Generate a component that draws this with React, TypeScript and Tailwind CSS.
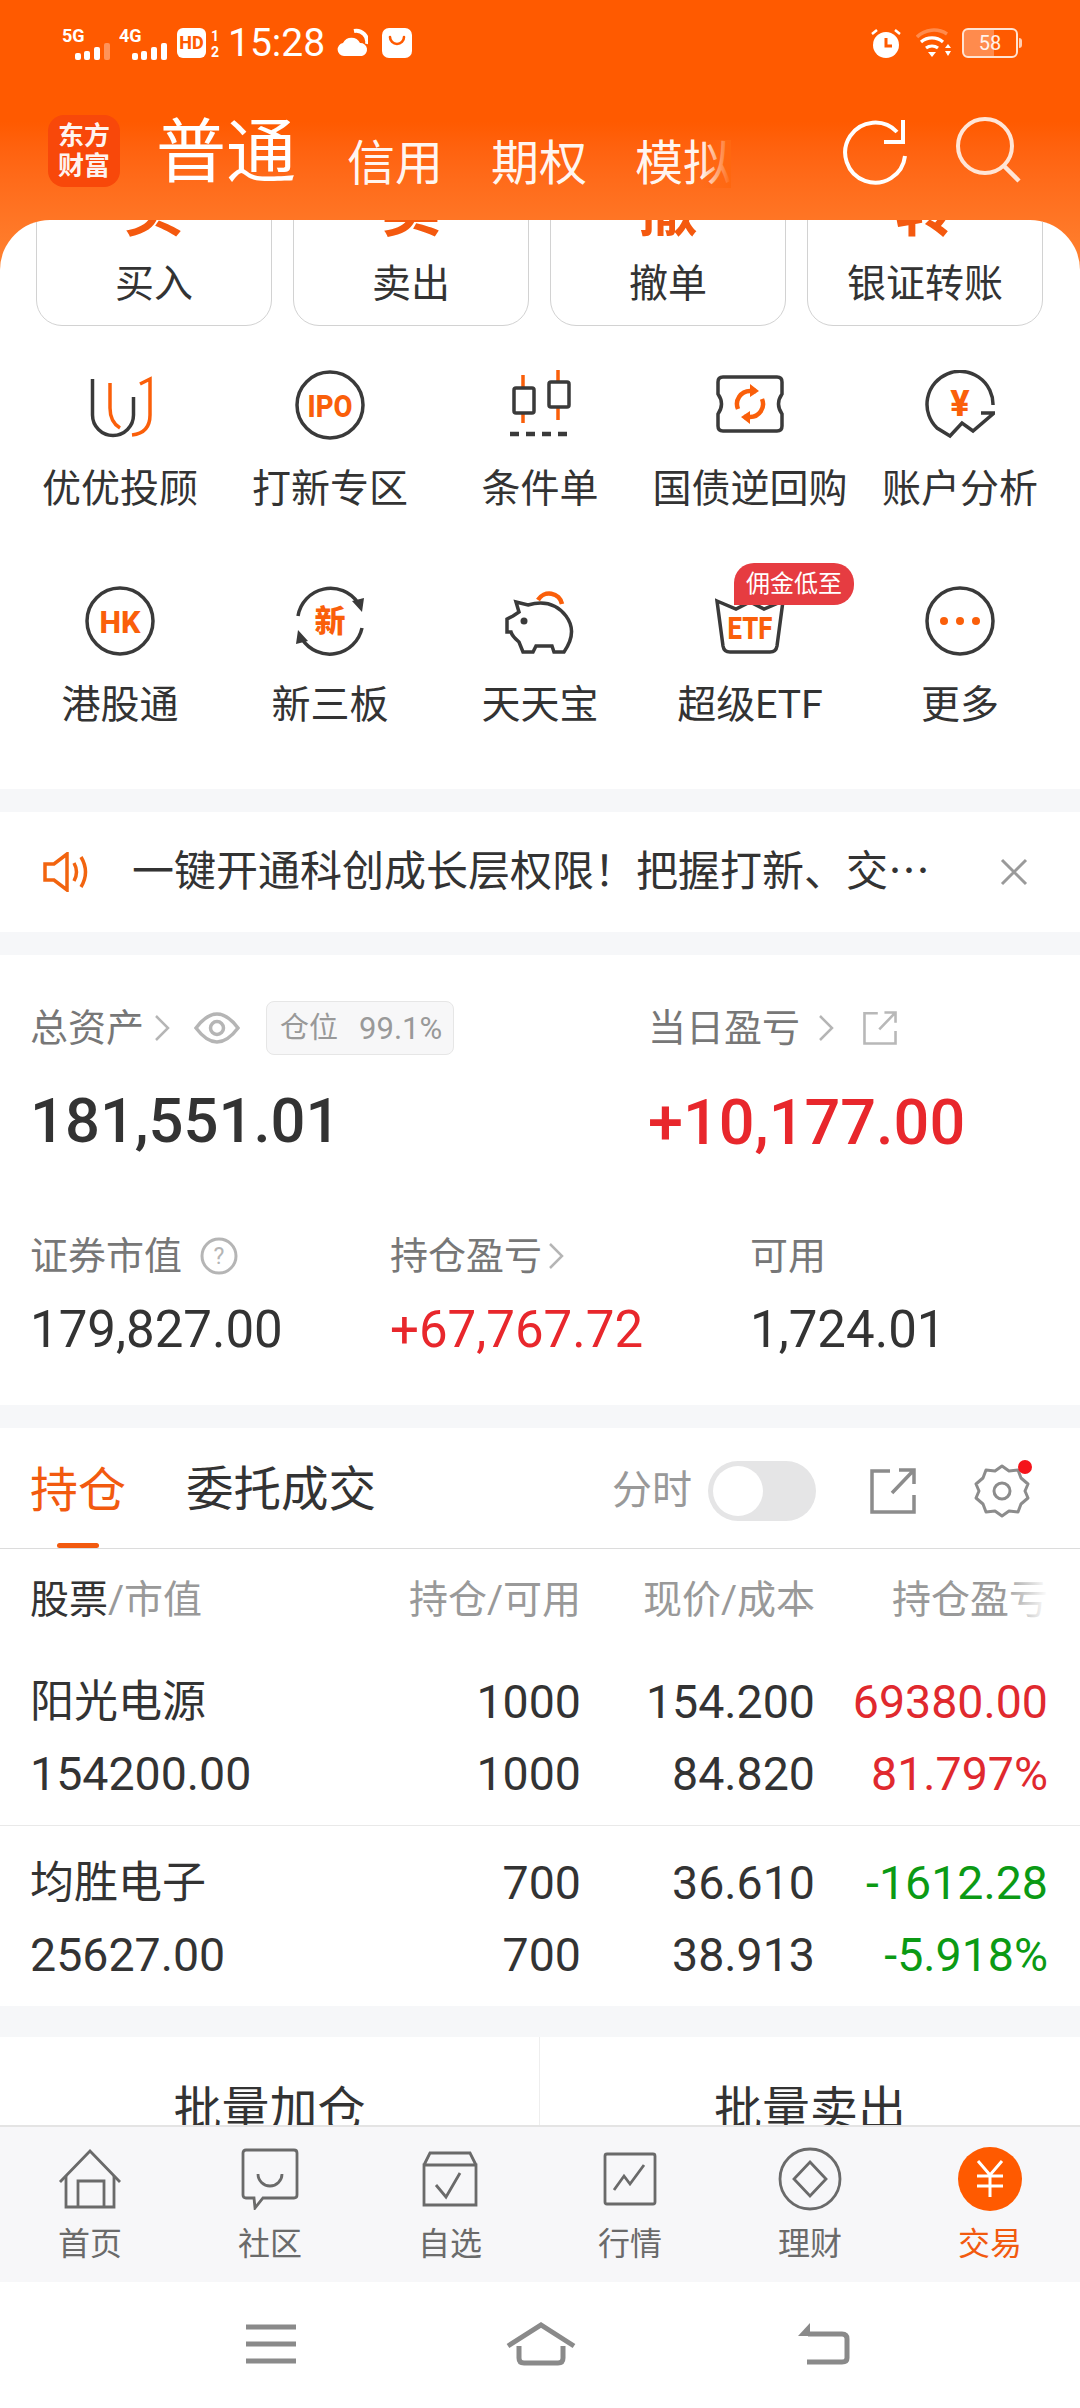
import React from 'react';

const DARK = '#3a3a3a';
const ORANGE = '#fa5f0a';

const Signal = ({ label, faded }: { label: string; faded?: boolean }) => (
  <svg width="50" height="34" viewBox="0 -2 50 34" className="shrink-0">
    <text x="0" y="14" fontSize="18" fontWeight="700" fill="#fff">{label}</text>
    <rect x="13" y="25" width="6" height="7" rx="2" fill="#fff" />
    <rect x="22" y="23" width="6" height="9" rx="2" fill="#fff" />
    <rect x="32" y="19" width="6" height="13" rx="2" fill="#fff" />
    <rect x="42" y="15" width="6" height="17" rx="2" fill="#fff" opacity={faded ? 0.35 : 1} />
  </svg>
);

const StatusBar = () => (
  <div className="flex h-[85px] items-center justify-between pl-[62px] pr-[62px] pt-[1px] text-white">
    <div className="flex items-center">
      <Signal label="5G" faded />
      <div className="ml-[7px]">
        <Signal label="4G" />
      </div>
      <svg width="43" height="32" viewBox="0 -1 43 32" className="ml-[8px]">
        <rect width="29" height="30" rx="6" fill="#fff" />
        <text x="14.5" y="21" textAnchor="middle" fontSize="18" fontWeight="800" fill="#ff5a00">HD</text>
        <text x="34" y="13" fontSize="14" fontWeight="700" fill="#fff">1</text>
        <text x="34" y="29" fontSize="14" fontWeight="700" fill="#fff">2</text>
      </svg>
      <span className="ml-[8px] text-[39px] leading-none">15:28</span>
      <svg width="31" height="30" viewBox="0 0 31 30" className="ml-[12px]">
        <path d="M7 28a6.5 6.5 0 0 1-1-12.9A9.5 9.5 0 0 1 23 15a6.6 6.6 0 0 1 2 13z" fill="#fff" />
        <path d="M17 3a11 11 0 0 1 13 13" fill="none" stroke="#fff" strokeWidth="4" />
      </svg>
      <svg width="30" height="30" viewBox="0 0 30 30" className="ml-[14px]">
        <rect width="30" height="30" rx="7" fill="#fff" />
        <path d="M8 9a7 7 0 0 0 14 0" fill="none" stroke="#ff5a00" strokeWidth="2.6" strokeLinecap="round" />
      </svg>
    </div>
    <div className="flex items-center">
      <svg width="30" height="30" viewBox="0 0 30 30">
        <circle cx="15" cy="17" r="13" fill="#fff" />
        <path d="M15 10v8h6" fill="none" stroke="#ff5a00" strokeWidth="3" />
        <path d="M1 6l5-4M29 6l-5-4" stroke="#fff" strokeWidth="2.5" />
      </svg>
      <svg width="36" height="30" viewBox="0 0 36 30" className="ml-[15px]">
        <path d="M1 9a24 24 0 0 1 30 -3" fill="none" stroke="#fff" strokeOpacity="0.3" strokeWidth="3.5" />
        <path d="M5 14a17 17 0 0 1 22 0M10 20a10 10 0 0 1 12 0" fill="none" stroke="#fff" strokeWidth="3.2" />
        <path d="M12 24h8l-4 5z" fill="#fff" />
        <path d="M29 20h6l-3-4zM29 23h6l-3 5z" fill="#fff" />
      </svg>
      <div className="relative ml-[10px] flex h-[30px] w-[56px] items-center rounded-[6px] border-2 border-[#ffe3d2]">
        <div className="h-full w-[30px] bg-white/30" />
        <span className="absolute inset-0 flex items-center justify-center text-[20px] leading-none text-white/90">58</span>
        <div className="absolute -right-[6px] top-[8px] h-[10px] w-[3px] rounded-r-sm bg-white/70" />
      </div>
    </div>
  </div>
);

const TopBar = () => (
  <div className="relative mt-[30px] flex h-[72px] items-center pl-[48px]">
    <div className="flex h-[72px] w-[72px] shrink-0 flex-col items-center justify-center rounded-[16px] bg-[#f8480a] text-[26px] font-bold leading-[30px] text-white/95">
      <span>东方</span>
      <span>财富</span>
    </div>
    <span className="ml-[36px] mt-[4px] text-[70px] leading-none text-white">普通</span>
    <span className="ml-[51px] mt-[26px] text-[48px] leading-none text-white/95">信用</span>
    <span className="ml-[48px] mt-[26px] text-[48px] leading-none text-white/95">期权</span>
    <span className="relative ml-[48px] mt-[26px] text-[48px] leading-none text-white/95">
      模拟
      <span className="absolute right-0 top-0 h-full w-[30px] bg-gradient-to-r from-transparent to-[#ff6710]" />
    </span>
    <svg width="66" height="66" viewBox="0 0 66 66" className="ml-[112px] mt-[1px] shrink-0">
      <path d="M62 37a30 30 0 1 1-8-24" fill="none" stroke="#fff" strokeWidth="4" />
      <path d="M60 1v22H41" fill="none" stroke="#fff" strokeWidth="4" />
    </svg>
    <svg width="66" height="66" viewBox="0 0 66 66" className="ml-[47px] mt-[-2px] shrink-0">
      <circle cx="29" cy="29" r="27" fill="none" stroke="#ffe5d6" strokeWidth="4" />
      <path d="M48 49l15 15" stroke="#ffe5d6" strokeWidth="4.5" />
    </svg>
  </div>
);

const QuickButton = ({ glyph, label }: { glyph: string; label: string }) => (
  <div className="flex h-[206px] flex-col items-center justify-end rounded-[26px] border border-[#d2d2d2] pb-[16px]">
    <span className="text-[60px] font-bold leading-[60px] text-[#f4590f]">{glyph}</span>
    <span className="mt-[18px] text-[39px] leading-[50px] text-[#333]">{label}</span>
  </div>
);

const S = { fill: 'none', stroke: DARK, strokeWidth: 3.5 };
const O = { fill: 'none', stroke: ORANGE, strokeWidth: 3.5 };

const TextInRing = ({ text, width }: { text: string; width: number }) => (
  <svg width="70" height="70" viewBox="0 0 70 70">
    <circle cx="35" cy="35" r="33" {...S} />
    <text x="35" y="47" textAnchor="middle" fontSize="32" fontWeight="800" fill={ORANGE} textLength={width} lengthAdjust="spacingAndGlyphs">{text}</text>
  </svg>
);

const icons: Record<string, React.ReactNode> = {
  uu: (
    <svg width="70" height="70" viewBox="0 0 70 70">
      <path d="M7.5 9V45a20.5 20.5 0 0 0 41 0V27" {...S} />
      <path d="M25 13V38Q25 52 35 58" {...O} />
      <path d="M55 14L65 9V45Q65 63 47 65" {...O} />
    </svg>
  ),
  ipo: <TextInRing text="IPO" width={45} />,
  candle: (
    <svg width="70" height="70" viewBox="0 0 70 70">
      <path d="M18 5V53M53 0V50" {...O} />
      <rect x="9" y="18" width="20" height="25" rx="2" fill="#fff" stroke={DARK} strokeWidth="3.5" />
      <rect x="44" y="12" width="20" height="25" rx="2" fill="#fff" stroke={DARK} strokeWidth="3.5" />
      <path d="M5 64H66" stroke={DARK} strokeWidth="4.5" strokeDasharray="9 7" />
    </svg>
  ),
  ticket: (
    <svg width="70" height="70" viewBox="0 0 70 70">
      <path d="M8 7H62Q67 7 67 12V24Q60 34 67 44V56Q67 61 62 61H8Q3 61 3 56V44Q10 34 3 24V12Q3 7 8 7Z" {...S} />
      <path d="M23 39A13 13 0 0 1 35 21L41 21M47 29A13 13 0 0 1 35 47L29 47" {...O} strokeWidth="4.5" />
      <path d="M35 14L44 21L35 27ZM35 54L26 47L35 41Z" fill={ORANGE} />
    </svg>
  ),
  yuan: (
    <svg width="70" height="70" viewBox="0 0 70 70">
      <path d="M68 35A33 33 0 1 0 12 58L25 66L37 53L48 61L69 43H56" {...S} />
      <text x="35" y="46" textAnchor="middle" fontSize="36" fontWeight="800" fill={ORANGE}>¥</text>
    </svg>
  ),
  hk: <TextInRing text="HK" width={41} />,
  xin: (
    <svg width="70" height="70" viewBox="0 0 70 70">
      <path d="M3 30A33 33 0 0 1 63 17M67 42A33 33 0 0 1 7 53" {...S} />
      <path d="M57 15L69 12L67 26ZM13 55L1 58L3 44Z" fill={DARK} />
      <text x="35" y="46" textAnchor="middle" fontSize="31" fontWeight="900" fill={ORANGE}>新</text>
    </svg>
  ),
  pig: (
    <svg width="72" height="70" viewBox="0 0 72 70">
      <path d="M34 14A13 13 0 0 1 58 18" {...O} strokeWidth="4.5" />
      <path d="M12 16L24 19Q48 12 62 30Q74 46 60 66H50L48 60H32L29 66H19L15 56Q8 50 7 46H3V33L9 30L15 26Z" {...S} />
      <circle cx="20" cy="35" r="3.5" fill={DARK} />
    </svg>
  ),
  etf: (
    <svg width="70" height="70" viewBox="0 0 70 70">
      <path d="M2 15L21 23L35 16L49 23L68 15L62 60Q61 66 55 66H15Q9 66 8 60Z" {...S} />
      <text x="35" y="53" textAnchor="middle" fontSize="31" fontWeight="800" fill={ORANGE} textLength={45} lengthAdjust="spacingAndGlyphs">ETF</text>
    </svg>
  ),
  more: (
    <svg width="70" height="70" viewBox="0 0 70 70">
      <circle cx="35" cy="35" r="33" {...S} />
      <circle cx="19" cy="35" r="4" fill={ORANGE} />
      <circle cx="35" cy="35" r="4" fill={ORANGE} />
      <circle cx="51" cy="35" r="4" fill={ORANGE} />
    </svg>
  ),
};

const menu = [
  ['uu', '优优投顾'], ['ipo', '打新专区'], ['candle', '条件单'], ['ticket', '国债逆回购'], ['yuan', '账户分析'],
  ['hk', '港股通'], ['xin', '新三板'], ['pig', '天天宝'], ['etf', '超级ETF'], ['more', '更多'],
];

const Chevron = ({ className = '' }: { className?: string }) => (
  <svg width="16" height="28" viewBox="0 0 16 28" className={className}>
    <path d="M2 2L14 14L2 26" fill="none" stroke="#b5b5b5" strokeWidth="2.5" />
  </svg>
);

const ShareIcon = ({ size, color }: { size: number; color: string }) => (
  <svg width={size} height={size} viewBox="0 0 46 46">
    <path d="M20 3H2V44H44V27" fill="none" stroke={color} strokeWidth="3.5" />
    <path d="M22 25L43 3M29 2H44V16" fill="none" stroke={color} strokeWidth="3.5" />
  </svg>
);

const rows = [
  { name: '阳光电源', value: '154200.00', qty: '1000', qty2: '1000', price: '154.200', cost: '84.820', pl: '69380.00', pct: '81.797%', color: 'text-[#e0292e]' },
  { name: '均胜电子', value: '25627.00', qty: '700', qty2: '700', price: '36.610', cost: '38.913', pl: '-1612.28', pct: '-5.918%', color: 'text-[#0b9a14]' },
];

const tabIconStroke = { fill: 'none', stroke: '#6a6a6a', strokeWidth: 2.8 };

const tabs: [string, React.ReactNode][] = [
  ['首页', (
    <svg width="64" height="60" viewBox="0 0 64 60">
      <path d="M2 33L32 2L62 33" {...tabIconStroke} />
      <path d="M8 27V58H56V27M20 58V32H46V58" {...tabIconStroke} />
    </svg>
  )],
  ['社区', (
    <svg width="58" height="62" viewBox="0 0 58 62">
      <path d="M5 2H53Q56 2 56 5V47Q56 50 53 50H22L14 60L13 50H5Q2 50 2 47V5Q2 2 5 2Z" {...tabIconStroke} />
      <path d="M17 26a12 12 0 0 0 24 0" {...tabIconStroke} />
    </svg>
  )],
  ['自选', (
    <svg width="56" height="56" viewBox="0 0 56 56">
      <path d="M2 14L8 2H48L54 14M2 14H54V54H2Z" {...tabIconStroke} />
      <path d="M14 34L24 46L38 22" {...tabIconStroke} />
    </svg>
  )],
  ['行情', (
    <svg width="54" height="54" viewBox="0 0 54 54">
      <rect x="2" y="2" width="50" height="50" rx="2" {...tabIconStroke} />
      <path d="M11 38L21 24L27 32L41 13" {...tabIconStroke} />
    </svg>
  )],
  ['理财', (
    <svg width="64" height="64" viewBox="0 0 64 64">
      <circle cx="32" cy="32" r="30" {...tabIconStroke} />
      <path d="M32 15L48 32L32 49L16 32Z" {...tabIconStroke} />
    </svg>
  )],
  ['交易', (
    <svg width="64" height="64" viewBox="0 0 64 64">
      <circle cx="32" cy="32" r="32" fill="#ff5a00" />
      <path d="M20 14L32 28L44 14M32 28V50M19 29H45M19 39H45" fill="none" stroke="#fff" strokeWidth="3" />
    </svg>
  )],
];

const App: React.FC = () => {
  return (
    <div className="flex h-[2408px] w-[1080px] flex-col overflow-hidden bg-white font-[Roboto,'Noto_Sans_CJK_SC',sans-serif]">
      <header className="h-[270px] shrink-0 bg-gradient-to-b from-[#ff5a00] from-[45%] to-[#ff8230]">
        <StatusBar />
        <TopBar />
      </header>

      <main className="relative -mt-[50px] flex-1 overflow-hidden rounded-t-[50px] bg-white">
        {/* Buttons scrolled under the header */}
        <div className="-mt-[100px] grid grid-cols-4 gap-x-[21px] pl-[36px] pr-[37px]">
          <QuickButton glyph="买" label="买入" />
          <QuickButton glyph="卖" label="卖出" />
          <QuickButton glyph="撤" label="撤单" />
          <QuickButton glyph="转" label="银证转账" />
        </div>

        <div className="grid h-[463px] grid-cols-5 content-start px-[15px] pt-[44px]">
          {menu.map(([id, label]) => (
            <div key={id} className="relative flex h-[216px] flex-col items-center">
              <div className="flex h-[70px] items-center">{icons[id]}</div>
              <span className="mt-[24px] whitespace-nowrap text-[39px] leading-[50px] text-[#333]">{label}</span>
              {id === 'etf' && (
                <span className="absolute left-[89px] -top-[23px] flex h-[42px] w-[120px] items-center justify-center rounded-[20px] rounded-bl-none bg-[#e63c41] text-[24px] leading-none text-white">
                  佣金低至
                </span>
              )}
            </div>
          ))}
        </div>

        {/* Notice */}
        <div className="border-y-[23px] border-[#f6f7f9]">
          <div className="flex h-[120px] items-center pl-[43px]">
            <svg width="47" height="40" viewBox="0 0 47 40">
              <path d="M2 12H11L24 2V38L11 28H2Z" fill="none" stroke="#f2640f" strokeWidth="3.5" />
              <path d="M31 11Q36 20 31 29M38 5Q47 20 38 35" fill="none" stroke="#f2640f" strokeWidth="3.5" />
            </svg>
            <span className="ml-[42px] w-[800px] whitespace-nowrap text-[42px] leading-none text-[#333]">
              一键开通科创成长层权限！把握打新、交⋯
            </span>
            <svg width="28" height="28" viewBox="0 0 28 28" className="ml-[68px] shrink-0">
              <path d="M2 2L26 26M26 2L2 26" stroke="#9a9a9a" strokeWidth="3" />
            </svg>
          </div>
        </div>

        {/* Assets */}
        <div className="h-[450px] px-[30px] pt-[46px]">
          <div className="flex h-[54px] items-center">
            <div className="flex w-[618px] items-center">
              <span className="text-[38px] leading-none text-[#777]">总资产</span>
              <Chevron className="ml-[10px]" />
              <svg width="46" height="36" viewBox="0 0 46 36" className="ml-[24px]">
                <path d="M2 18Q23 -10 44 18Q23 46 2 18Z" fill="none" stroke="#b5b5b5" strokeWidth="3.5" />
                <circle cx="23" cy="18" r="6.5" fill="none" stroke="#b5b5b5" strokeWidth="3.5" />
              </svg>
              <div className="ml-[26px] flex h-[54px] w-[188px] items-center rounded-[8px] border border-[#e6e6e6] bg-[#f7f7f8] pl-[13px] text-[#999]">
                <span className="text-[29px] leading-none">仓位</span>
                <span className="ml-[21px] text-[31px] leading-none">99.1%</span>
              </div>
            </div>
            <span className="text-[38px] leading-none text-[#777]">当日盈亏</span>
            <Chevron className="ml-[18px]" />
            <div className="ml-[29px]">
              <ShareIcon size={34} color="#b8b8b8" />
            </div>
          </div>
          <div className="mt-[27px] flex h-[80px] items-center font-medium leading-none">
            <span className="w-[618px] text-[61.5px] text-[#333]">181,551.01</span>
            <span className="text-[63px] text-[#e8272c]">+10,177.00</span>
          </div>
          <div className="mt-[69px] grid grid-cols-[360px_360px_1fr] text-[38px] leading-none text-[#777]">
            <div className="flex h-[50px] items-center">
              证券市值
              <svg width="38" height="38" viewBox="0 0 38 38" className="ml-[18px]">
                <circle cx="19" cy="19" r="17" fill="none" stroke="#b5b5b5" strokeWidth="3" />
                <text x="19" y="27" textAnchor="middle" fontSize="23" fill="#b5b5b5">?</text>
              </svg>
            </div>
            <div className="flex h-[50px] items-center">
              持仓盈亏
              <Chevron className="ml-[6px]" />
            </div>
            <div className="flex h-[50px] items-center">可用</div>
          </div>
          <div className="mt-[24px] grid grid-cols-[360px_360px_1fr] text-[51px] leading-[50px] text-[#333]">
            <span>179,827.00</span>
            <span className="text-[#e8272c]">+67,767.72</span>
            <span>1,724.01</span>
          </div>
        </div>

        {/* Holdings */}
        <div className="border-t-[23px] border-[#f6f7f9]">
          <div className="relative flex h-[121px] items-center border-b border-[#dcdcdc] pl-[30px] pt-[6px]">
            <span className="text-[48px] leading-none text-[#f25a0f]">持仓</span>
            <span className="ml-[60px] text-[47.5px] leading-none text-[#333]">委托成交</span>
            <span className="ml-[236px] text-[40px] leading-none text-[#999]">分时</span>
            <div className="ml-[16px] flex h-[60px] w-[108px] items-center rounded-full bg-[#e5e5e6] pl-[5px]">
              <div className="h-[50px] w-[50px] rounded-full bg-white" />
            </div>
            <div className="ml-[54px]">
              <ShareIcon size={46} color="#8c8c8c" />
            </div>
            <svg width="56" height="56" viewBox="0 0 56 56" className="ml-[58px]">
              <path d="M28 3L35 8L44 7L47 15L54 21L51 28L54 35L47 41L44 49L35 48L28 53L21 48L12 49L9 41L2 35L5 28L2 21L9 15L12 7L21 8Z" fill="none" stroke="#8c8c8c" strokeWidth="3" strokeLinejoin="round" />
              <circle cx="28" cy="28" r="8" fill="none" stroke="#8c8c8c" strokeWidth="3" />
            </svg>
            <span className="absolute left-[1018px] top-[32px] h-[14px] w-[14px] rounded-full bg-[#f5141a]" />
            <span className="absolute bottom-0 left-[57px] h-[5px] w-[42px] rounded-full bg-[#f25a0f]" />
          </div>

          <div className="grid h-[95px] grid-cols-[300px_251px_234px_233px] items-center px-[30px] pt-[8px] text-right text-[39px] leading-none text-[#999]">
            <span className="text-left">
              <span className="text-[#333]">股票</span>/市值
            </span>
            <span>持仓/可用</span>
            <span>现价/成本</span>
            <span className="relative">
              持仓盈亏
              <span className="absolute right-0 top-0 h-full w-[45px] bg-gradient-to-r from-transparent to-white" />
            </span>
          </div>

          {rows.map((row, i) => (
            <div
              key={row.name}
              className={`grid grid-cols-[300px_251px_234px_233px] px-[30px] pb-[15px] pt-[21px] text-right text-[46.5px] leading-[72px] text-[#333] ${i > 0 ? 'border-t border-[#e9e9e9]' : 'pt-[22px]'}`}
            >
              <span className="text-left text-[44px]">{row.name}</span>
              <span>{row.qty}</span>
              <span>{row.price}</span>
              <span className={row.color}>{row.pl}</span>
              <span className="text-left">{row.value}</span>
              <span>{row.qty2}</span>
              <span>{row.cost}</span>
              <span className={row.color}>{row.pct}</span>
            </div>
          ))}
        </div>

        {/* Batch actions, cut off by the tab bar */}
        <div className="grid h-[140px] grid-cols-2 border-t-[31px] border-[#f6f7f9] text-center text-[48px] leading-none text-[#333]">
          <div className="border-r border-[#eeeeee] pt-[49px]">批量加仓</div>
          <div className="pt-[49px]">批量卖出</div>
        </div>
      </main>

      <nav className="grid h-[157px] shrink-0 grid-cols-6 border-t-2 border-[#e4e4e4] bg-[#f7f7f9] pt-[20px]">
        {tabs.map(([label, icon], i) => (
          <div key={label} className="flex flex-col items-center">
            <div className="flex h-[64px] items-center">{icon}</div>
            <span className={`mt-[13px] text-[32px] leading-[40px] ${i === 5 ? 'text-[#f25a0f]' : 'text-[#6a6a6a]'}`}>{label}</span>
          </div>
        ))}
      </nav>

      <div className="flex h-[126px] shrink-0 items-center bg-white pb-[2px] pl-[246px]">
        <svg width="50" height="40" viewBox="0 0 50 40">
          <path d="M0 3H50M0 20H50M0 37H50" stroke="#8a8a8a" strokeWidth="5" />
        </svg>
        <svg width="70" height="44" viewBox="0 0 70 44" className="ml-[210px]">
          <path d="M2 24L35 3L68 24" fill="none" stroke="#8a8a8a" strokeWidth="5" />
          <path d="M13 24V36Q13 41 18 41H52Q57 41 57 36V24" fill="none" stroke="#8a8a8a" strokeWidth="5" />
        </svg>
        <svg width="52" height="42" viewBox="0 0 52 42" className="ml-[222px]">
          <path d="M10 11H44Q49 11 49 16V35Q49 39 44 39H9" fill="none" stroke="#8a8a8a" strokeWidth="5" />
          <path d="M0 13L12 0V13Z" fill="#8a8a8a" />
        </svg>
      </div>
    </div>
  );
};

export default App;
